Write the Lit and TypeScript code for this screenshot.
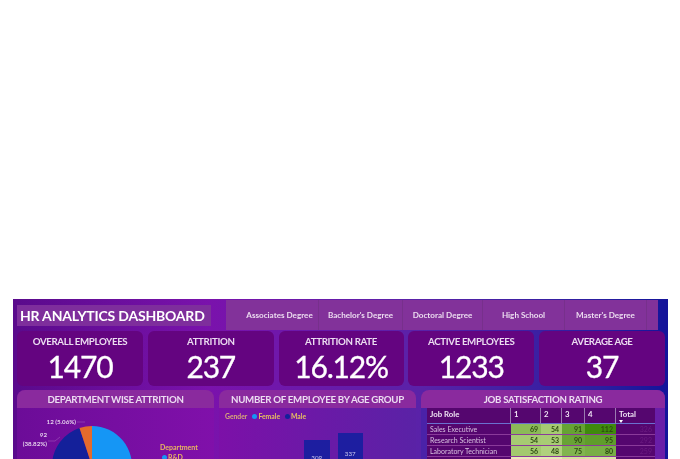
import { LitElement, html, css, svg } from "lit";
import { customElement } from "lit/decorators.js";

const slicers = ["Associates Degree", "Bachelor's Degree", "Doctoral Degree", "High School", "Master's Degree"];
const kpis = [
  ["OVERALL EMPLOYEES", "1470"],
  ["ATTRITION", "237"],
  ["ATTRITION RATE", "16.12%"],
  ["ACTIVE EMPLOYEES", "1233"],
  ["AVERAGE AGE", "37"],
];
const rows: [string, (number | string)[], string[], string][] = [
  ["Sales Executive", [69, 54, 91, 112], ["#8cba58", "#a6cb72", "#66a233", "#3f8a0c"], "326"],
  ["Research Scientist", [54, 53, 90, 95], ["#a6cb72", "#a8cc74", "#68a335", "#5f9d2b"], "292"],
  ["Laboratory Technician", [56, 48, 75, 80], ["#a3c96f", "#b0d17e", "#81b44f", "#79ae46"], "259"],
  ["", ["", "", "", ""], ["#ece8bc", "#e8e8b8", "#d8e0a0", "#dce2a6"], ""],
];

@customElement("app-root")
export class AppRoot extends LitElement {
  static styles = css`
    :host { display: block; width: 680px; height: 459px; overflow: hidden; background: #fff; font-family: "Lato", "Open Sans", sans-serif; }
    .dash { margin: 299px 12px 0 13px; height: 200px; padding: 1px 3px 0 4px; box-sizing: border-box; display: flex; flex-direction: column; background: linear-gradient(90deg, #5a0a8c 0%, #7a12ac 30%, #5a22a8 62%, #2a1ea0 90%, #14149a 100%); filter: blur(0.5px); }
    .top { display: flex; height: 30px; flex: none; align-items: flex-start; }
    .title { margin-top: 5px; width: 194px; height: 21px; background: #7e2e9c; color: #fff; font-weight: 700; font-size: 14px; letter-spacing: -0.2px; line-height: 21px; padding-left: 3px; box-sizing: border-box; white-space: nowrap; }
    .slicer { margin-left: 15px; width: 432px; height: 30px; background: #82329a; display: grid; grid-template-columns: 93px 84px 80px 82px 82px 1fr; }
    .slicer span { display: flex; align-items: center; justify-content: center; color: #ecdcf0; font-size: 8.1px; font-weight: 700; border-right: 1px solid #77308c; white-space: nowrap; }
    .slicer span:first-child { padding-left: 15px; }
    .slicer span.end { border-right: 0; }
    .kpis { display: grid; grid-template-columns: 126px 126px 125px 126px 126px; column-gap: 4.75px; margin-top: 1px; height: 55px; flex: none; }
    .kpi { background: #640480; border-radius: 6px; color: #fff; text-align: center; display: flex; flex-direction: column; align-items: center; }
    .kpi small { font-size: 9.7px; letter-spacing: -0.35px; font-weight: 700; color: #ebdcf0; margin-top: 4px; line-height: 13px; white-space: nowrap; }
    .kpi b { font-size: 30px; font-weight: 400; line-height: 36px; letter-spacing: -1.2px; -webkit-text-stroke: 0.3px #fff; }
    .panels { display: grid; grid-template-columns: 197px 197px 244px; column-gap: 5px; margin-top: 4px; flex: 1; min-height: 0; }
    .panel { border-radius: 8px 8px 0 0; overflow: hidden; display: flex; flex-direction: column; }
    .panel h3 { margin: 0; height: 18px; flex: none; background: #8a2a9e; color: #ecdcf2; text-align: center; font-size: 9.7px; letter-spacing: -0.3px; font-weight: 700; line-height: 18px; white-space: nowrap; }
    .p1 { background: linear-gradient(90deg, #6c0c98, #8010aa); }
    .p2 { background: linear-gradient(90deg, #7c10a8, #5a22a6); }
    .p3 { background: linear-gradient(90deg, #4a22a8, #6a1ea8); }
    .pierow { display: flex; }
    .pie { display: block; flex: none; }
    .deptlegend { padding-top: 34px; font-size: 7px; font-weight: 700; color: #e8b860; line-height: 10px; white-space: nowrap; }
    .deptlegend i { display: inline-block; width: 5px; height: 5px; border-radius: 50%; background: #1596f5; margin: 0 1px 0 2px; }
    .legend { font-size: 6.8px; font-weight: 700; color: #e8c060; padding: 4px 0 0 6px; display: flex; gap: 5px; align-items: center; white-space: nowrap; line-height: 9px; }
    .legend span:first-child { color: #d8a878; }
    .legend i { display: inline-block; width: 5px; height: 5px; border-radius: 50%; margin-right: 1px; }
    .bars { display: flex; gap: 8px; padding: 12px 0 0 85px; align-items: flex-start; }
    .bar { width: 25.5px; background: #1d1ea0; color: #c8c8f0; font-size: 6.2px; line-height: 8px; text-align: center; padding-top: 17px; height: 80px; box-sizing: border-box; }
    .bar.a { margin-top: 7px; padding-top: 14px; }
    table { border-collapse: separate; border-spacing: 0; width: 228px; margin-left: 6px; font-size: 7px; table-layout: fixed; color: #d8c0e0; }
    th { background: #55066f; color: #f0e4f4; font-size: 7.8px; font-weight: 700; text-align: left; height: 16px; box-sizing: border-box; padding: 1px 0 0 3px; vertical-align: top; border-right: 1px solid #9a7ab0; border-bottom: 1px solid #6a70d0; line-height: 11px; }
    th.t { border-right: 0; }
    td { height: 11px; box-sizing: border-box; padding: 0 3px; line-height: 10px; border-bottom: 1px solid #8a3a9a; background: #55066f; }
    td.n { text-align: right; color: #2c4a10; font-weight: 700; }
    td.total { text-align: right; color: #6a1a80; padding-left: 3px; }
    td.h { padding-left: 3px; white-space: nowrap; }
    .tri { display: block; width: 0; height: 0; border: 2.5px solid transparent; border-top: 3px solid #fff; border-bottom: 0; }
  `;

  pie() {
    const cx = 75, cy = 58, r = 40;
    const pt = (f: number) => {
      const a = f * 2 * Math.PI;
      return `${cx + r * Math.sin(a)} ${cy - r * Math.cos(a)}`;
    };
    const arc = (a: number, b: number, c: string) =>
      svg`<path d="M${cx} ${cy}L${pt(a)}A${r} ${r} 0 ${b - a > 0.5 ? 1 : 0} 1 ${pt(b)}Z" fill="${c}"/>`;
    return html`<svg class="pie" width="143" height="60" viewBox="0 0 143 60">
      ${arc(0, 0.561, "#1596f5")}${arc(0.561, 0.9494, "#14209a")}${arc(0.9494, 1, "#e56a2c")}
      <path d="M60 14 H68 M31 33 H38 L43 29" fill="none" stroke="#a860c0" stroke-width=".5"/>
      <g font-size="6.2" font-weight="700" fill="#e4d0ec" text-anchor="end">
        <text x="59" y="16">12 (5.06%)</text>
        <text x="30" y="29">92</text>
        <text x="30" y="38">(38.82%)</text>
      </g>
    </svg>`;
  }

  render() {
    return html`<div class="dash">
      <div class="top">
        <div class="title">HR ANALYTICS DASHBOARD</div>
        <div class="slicer">${slicers.map((s) => html`<span>${s}</span>`)}<span class="end"></span></div>
      </div>
      <div class="kpis">${kpis.map(([l, v]) => html`<div class="kpi"><small>${l}</small><b>${v}</b></div>`)}</div>
      <div class="panels">
        <div class="panel p1"><h3>DEPARTMENT WISE ATTRITION</h3>
          <div class="pierow">${this.pie()}<div class="deptlegend">Department<br/><i></i>R&amp;D</div></div>
        </div>
        <div class="panel p2"><h3>NUMBER OF EMPLOYEE BY AGE GROUP</h3>
          <div class="legend"><span>Gender</span><span><i style="background:#1596f5"></i>Female</span><span><i style="background:#14209a"></i>Male</span></div>
          <div class="bars"><div class="bar a">309</div><div class="bar">337</div></div>
        </div>
        <div class="panel p3"><h3>JOB SATISFACTION RATING</h3>
          <table>
            <colgroup><col style="width:84px"/><col style="width:30px"/><col style="width:21px"/><col style="width:23px"/><col style="width:31px"/><col/></colgroup>
            <tr><th>Job Role</th><th>1</th><th>2</th><th>3</th><th>4</th><th class="t">Total<span class="tri"></span></th></tr>
            ${rows.map(([n, v, c, t]) => html`<tr><td class="h">${n}</td>${v.map((x, i) => html`<td class="n" style="background:${c[i]}">${x}</td>`)}<td class="total">${t}</td></tr>`)}
          </table>
        </div>
      </div>
    </div>`;
  }
}
